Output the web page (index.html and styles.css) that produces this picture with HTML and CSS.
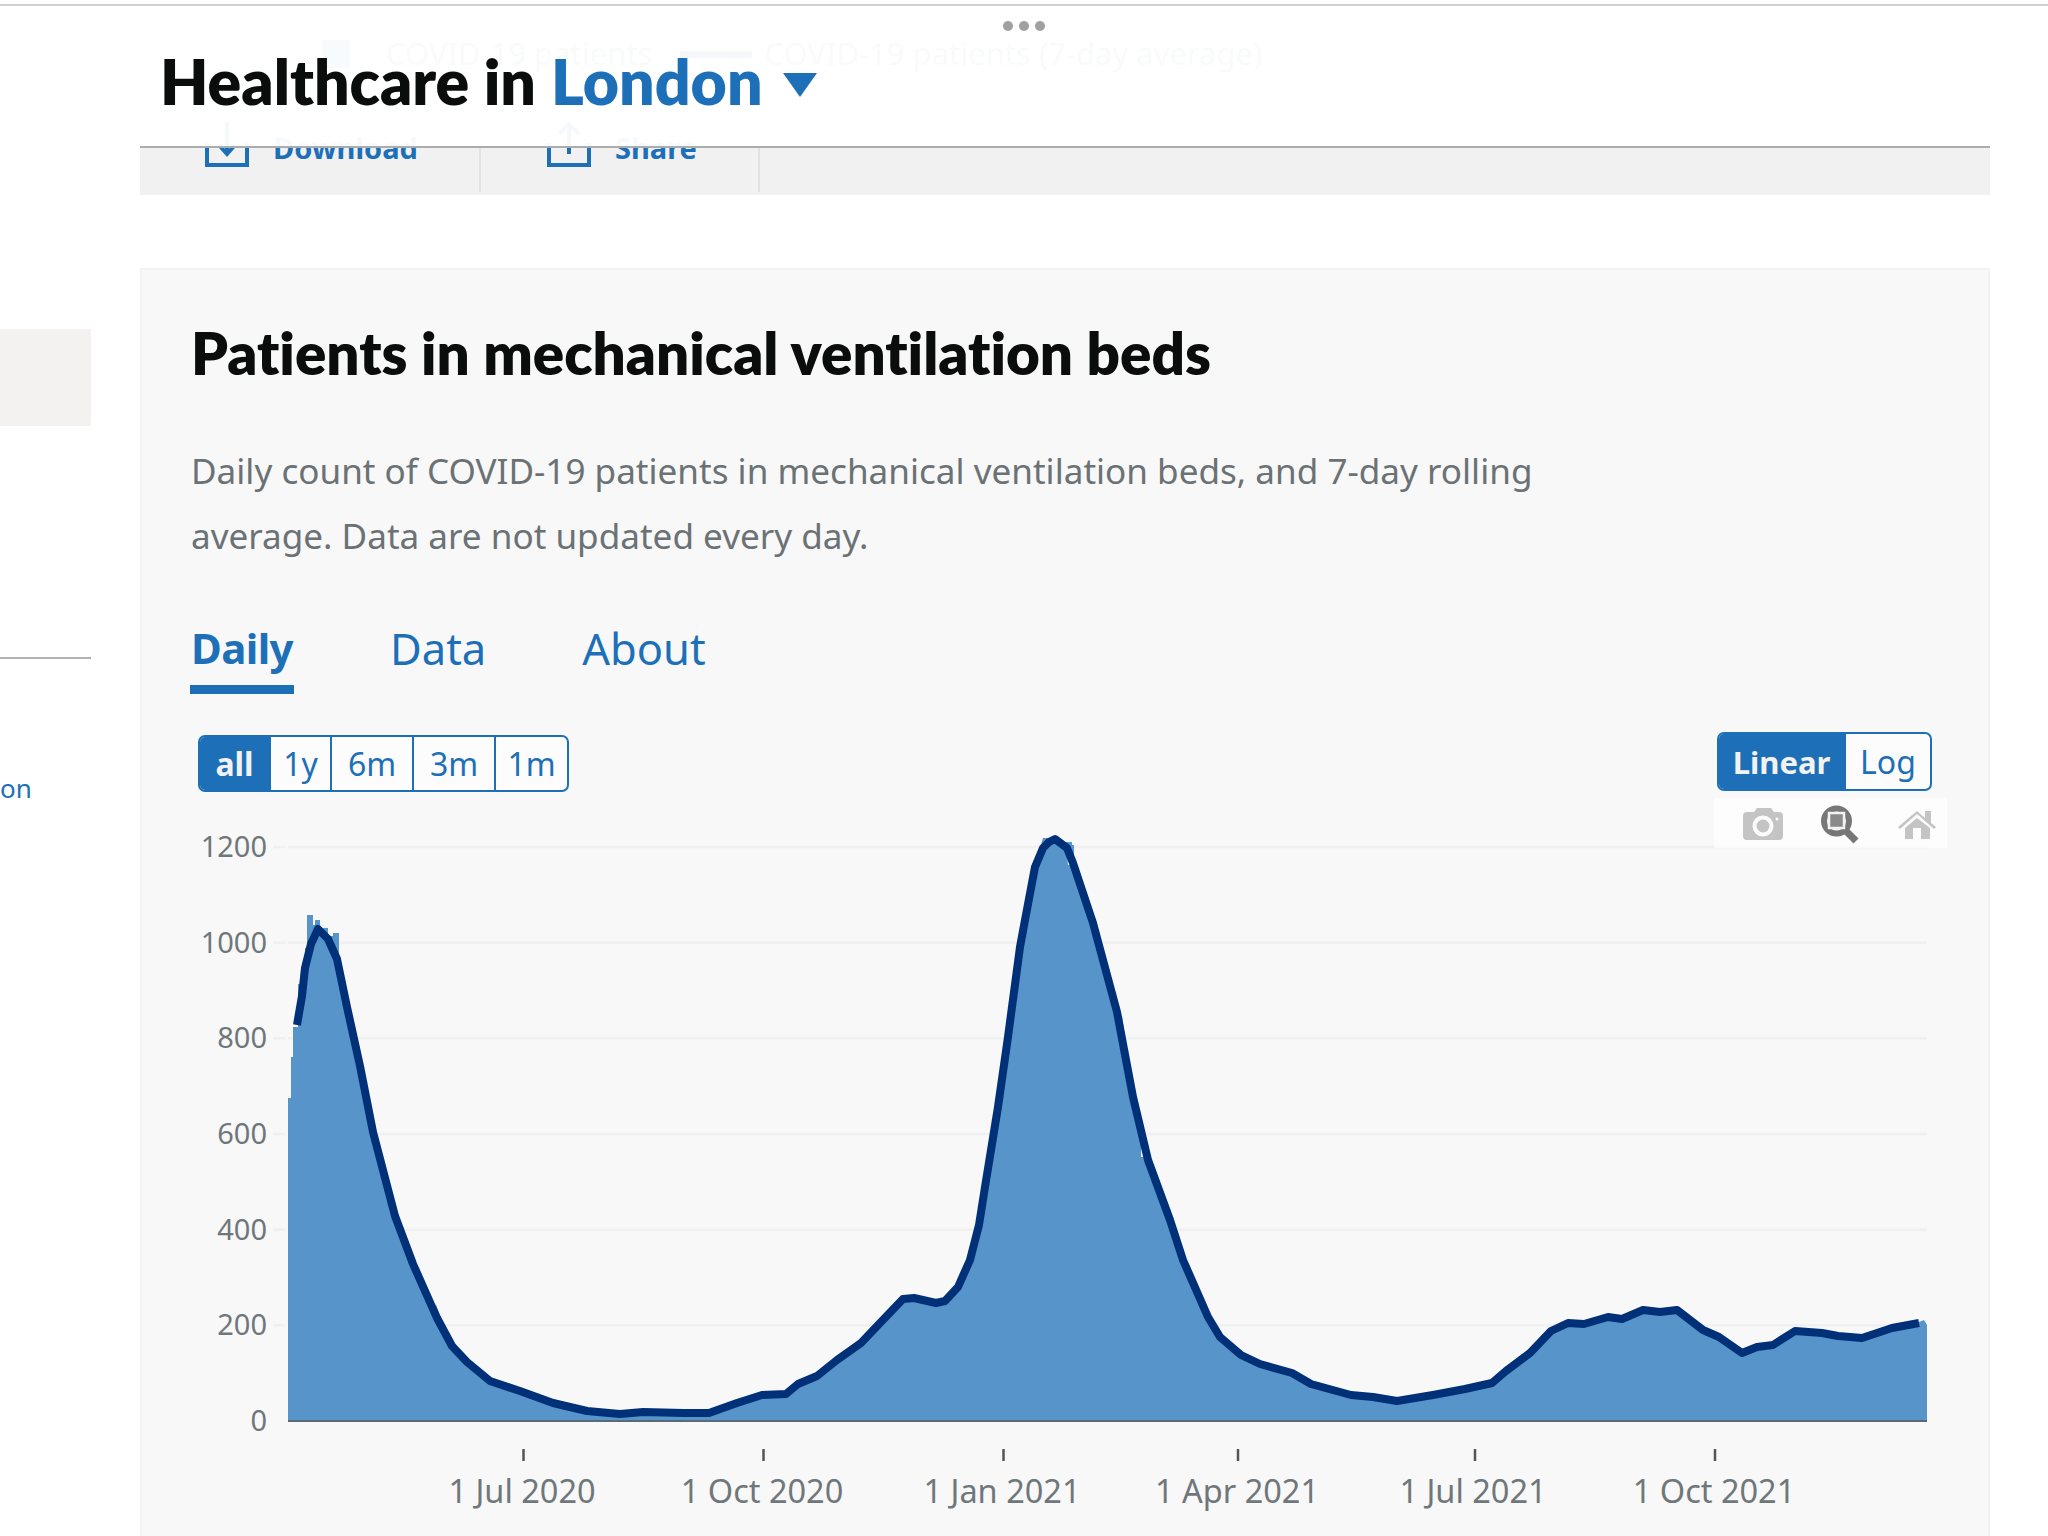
FILE: index.html
```html
<!DOCTYPE html>
<html lang="en">
<head>
<meta charset="utf-8">
<title>Healthcare in London</title>
<link rel="stylesheet" href="styles.css">
</head>
<body>
<div class="page">
  <aside class="side">
    <div class="side-box"></div>
    <div class="side-rule"></div>
    <a class="side-link">on</a>
  </aside>
  <main class="main">
    <div class="legend">
      <span class="swatch-box"></span><span class="legend-text">COVID-19 patients</span>
      <span class="swatch-line"></span><span class="legend-text">COVID-19 patients (7-day average)</span>
    </div>
    <div class="toolbar">
      <a class="tool tool-first">
        <svg class="tool-icon" viewBox="0 0 44 46"><path d="M2 21v22h40V21M22 0v30M14 23l8 9 8-9" fill="none" stroke="#1d70b8" stroke-width="4"/></svg>
        <span>Download</span>
      </a>
      <a class="tool tool-second">
        <svg class="tool-icon" viewBox="0 0 44 46"><path d="M2 21v22h40V21M22 32V3M12 12l10-10 10 10" fill="none" stroke="#1d70b8" stroke-width="4"/></svg>
        <span>Share</span>
      </a>
    </div>
    <section class="card">
      <h2 class="card-title">Patients in mechanical ventilation beds</h2>
      <p class="card-text">Daily count of COVID-19 patients in mechanical ventilation beds, and 7-day rolling average. Data are not updated every day.</p>
      <nav class="tabs">
        <a class="tab tab-active">Daily</a>
        <a class="tab">Data</a>
        <a class="tab">About</a>
      </nav>
      <div class="controls">
        <div class="range">
          <span class="seg seg-all seg-on">all</span>
          <span class="seg seg-1y">1y</span>
          <span class="seg seg-6m">6m</span>
          <span class="seg seg-3m">3m</span>
          <span class="seg seg-1m">1m</span>
        </div>
        <div class="scale">
          <span class="seg seg-linear seg-on">Linear</span>
          <span class="seg seg-log">Log</span>
        </div>
      </div>
      <div class="chart">
        <div class="modebar">
          <svg class="mode-svg" viewBox="1714 798 233 50">
            <path fill="#c4c4c4" d="M1747 812h7l3-4h14l3 4h5a4 4 0 0 1 4 4v20a4 4 0 0 1-4 4h-32a4 4 0 0 1-4-4v-20a4 4 0 0 1 4-4z"/>
            <circle cx="1763" cy="826" r="8.5" fill="none" stroke="#fcfcfc" stroke-width="4"/>
            <circle cx="1777" cy="819" r="1.5" fill="#fcfcfc"/>
            <circle cx="1836.5" cy="821" r="12.5" fill="none" stroke="#777" stroke-width="6"/>
            <rect x="1829" y="813" width="15" height="15" fill="#8a8a8a" stroke="#f2f2f2" stroke-width="2.5"/>
            <path d="M1846 831l10 10" stroke="#777" stroke-width="7" fill="none"/>
            <path fill="#c4c4c4" d="M1917 811l8 7v-7h6v12l5 4-2 2-17-15-17 15-2-2zM1905 828l12-10 13 10v11h-9v-11h-8v11h-8z"/>
          </svg>
        </div>
        <svg class="plot" viewBox="142 798 1846 738">
          <g class="grid">
            <path d="M273 847H285M288 847H1927M273 942.7H285M288 942.7H1927M273 1038.3H285M288 1038.3H1927M273 1134H285M288 1134H1927M273 1229.7H285M288 1229.7H1927M273 1325.3H285M288 1325.3H1927"/>
          </g>
          <path class="area" d="M288 1421V1098H291V1057H293V1027H298V984H302V963H305V948H307V915H313V925H315V920H320V928H328V936H333V933H339V958L346 1005L360 1062L373 1130L395 1214L413 1262L430 1300H432V1305H436L452 1346L467 1362L490 1381L520 1391L553 1402L587 1410L620 1414V1418H622V1414L643 1411L684 1413L709 1413L737 1403L762 1395L786 1393L798 1384L817 1376L837 1360L861 1342L880 1323L903 1299L914 1296L936 1302L945 1301L958 1286L972 1256L977 1238L985 1186L998 1106L1008 1036L1020 946L1025 920L1035 866L1043 838H1060V842H1072V845H1074V865L1093 923L1117 1010H1119V1016H1122L1133 1096L1148 1160L1170 1220L1184 1260L1208 1316L1220 1336L1241 1353L1259 1363L1292 1372L1311 1384L1351 1395L1373 1396L1397 1401L1433 1395L1465 1389L1492 1382L1506 1370L1530 1353L1551 1330L1568 1323L1584 1324L1608 1316L1622 1318L1643 1310L1660 1311L1677 1310L1703 1330L1719 1336L1742 1352L1757 1347L1773 1345L1795 1330L1822 1332L1838 1336L1862 1338L1892 1328L1919 1322L1924 1320L1927 1325V1421Z"/>
          <path class="notch" d="M1067 853h3v12h-2zM1141 1144h2v13h-2z"/>
          <path class="axis" d="M288 1421H1927"/>
          <path class="line" d="M297 1025L302 996L305 968L311 944L318 929L328 939L337 959L347 1007L360 1066L373 1132L395 1216L413 1264L437 1318L452 1346L467 1362L490 1381L520 1391L553 1403L587 1411L620 1414L643 1412L684 1413L709 1413L737 1403L762 1395L786 1394L798 1384L817 1376L837 1360L861 1343L880 1323L903 1299L914 1298L936 1303L945 1301L958 1287L970 1260L979 1225L985 1187L998 1107L1008 1037L1020 947L1025 920L1035 867L1043 848L1049 842L1055 839L1067 848L1073 863L1093 923L1117 1012L1133 1097L1148 1160L1170 1220L1183 1260L1208 1317L1220 1337L1241 1355L1260 1364L1292 1373L1311 1384L1351 1395L1373 1397L1397 1401L1433 1395L1465 1389L1492 1383L1506 1371L1530 1353L1551 1331L1568 1323L1584 1324L1608 1317L1622 1319L1643 1310L1660 1312L1677 1310L1703 1330L1719 1337L1742 1353L1757 1347L1773 1345L1795 1331L1822 1333L1838 1336L1862 1338L1892 1328L1919 1323"/>
          <g class="ylabels">
            <text x="267" y="857">1200</text>
            <text x="267" y="952.7">1000</text>
            <text x="267" y="1048.3">800</text>
            <text x="267" y="1144">600</text>
            <text x="267" y="1239.7">400</text>
            <text x="267" y="1335.3">200</text>
            <text x="267" y="1431">0</text>
          </g>
          <path class="ticks" d="M523.5 1449v12M763.5 1449v12M1003.5 1449v12M1238 1449v12M1475 1449v12M1715 1449v12"/>
          <g class="xlabels">
            <text x="522" y="1503">1 Jul 2020</text>
            <text x="762" y="1503">1 Oct 2020</text>
            <text x="1002" y="1503">1 Jan 2021</text>
            <text x="1237" y="1503">1 Apr 2021</text>
            <text x="1473" y="1503">1 Jul 2021</text>
            <text x="1714" y="1503">1 Oct 2021</text>
          </g>
        </svg>
      </div>
    </section>
  </main>
</div>
<header class="sticky">
  <div class="dots"><i></i><i></i><i></i></div>
  <div class="sticky-inner">
    <h1 class="page-title">Healthcare in <span class="place">London</span><span class="caret"></span></h1>
  </div>
</header>
</body>
</html>
```
FILE: styles.css
```css
* { box-sizing: border-box; }
html, body { margin: 0; padding: 0; background: #fff; }
body {
  width: 2048px;
  height: 1536px;
  overflow: hidden;
  font-family: "Noto Sans", "Open Sans", sans-serif;
  position: relative;
}
.page { display: flex; height: 1536px; overflow: hidden; }

.side { width: 91px; padding-top: 329px; flex: none; }
.side-box { height: 97px; background: #f3f2f1; }
.side-rule { height: 2px; background: #b1b4b6; margin-top: 231px; }
.side-link { display: block; margin-top: 109px; color: #1d70b8; font-size: 26px; line-height: 40px; }

.main { width: 1850px; margin-left: 49px; flex: none; }

.legend { display: flex; align-items: center; height: 106px; padding: 37px 0 35px 182px; color: #6f777b; font-size: 31px; }
.swatch-box { width: 28px; height: 28px; background: #5694ca; margin-right: 36px; flex: none; }
.swatch-line { width: 72px; height: 7px; background: #003078; margin: 0 12px 0 28px; flex: none; }
.legend-text { white-space: nowrap; line-height: 34px; margin-top: -2px; }

.toolbar { display: flex; height: 89px; background: #f1f1f1; }
.tool { display: flex; align-items: flex-start; color: #1d70b8; font-size: 29px; font-weight: 700; height: 86px; border-right: 2px solid #e2e2e2; padding-top: 16px; }
.tool-first { width: 341px; padding-left: 65px; }
.tool-second { width: 279px; padding-left: 66px; }
.tool-icon { width: 44px; height: 46px; flex: none; margin-right: 24px; }
.tool span { line-height: 40px; margin-top: 6px; }

.card { margin-top: 73px; border: 2px solid #f2f2f2; background: #f8f8f8; padding: 0 50px 0 49px; height: 1300px; }
.card-title { margin: 46px 0 0 0; font-family: Lato, "Noto Sans", sans-serif; font-size: 58.3px; line-height: 72px; font-weight: 800; color: #0b0c0c; white-space: nowrap; font-variant-ligatures: none; }
.card-text { margin: 51px 0 0; width: 1400px; font-size: 35.1px; line-height: 65px; color: #6b7276; position: relative; top: -1px; }
.tabs { display: flex; margin-top: 50px; }
.tab { font-size: 43.5px; line-height: 56px; color: #1d70b8; height: 75px; margin-right: 96px; padding-top: 1px; }
.tab-active { font-size: 42px; font-weight: 700; border-bottom: 9px solid #1d70b8; margin-left: -1px; padding: 1px 1px 0; letter-spacing: -0.6px; }

.controls { display: flex; justify-content: space-between; align-items: flex-start; margin-top: 38px; height: 66px; padding: 3px 6px 0 7px; }
.range, .scale { display: flex; height: 57px; border: 2px solid #1d70b8; border-radius: 7px; background: #fcfcfc; overflow: hidden; }
.scale { margin-top: -3px; height: 59px; }
.seg { display: flex; align-items: center; justify-content: center; font-size: 32px; color: #1d70b8; border-right: 2px solid #1d70b8; height: 100%; }
.seg:last-child { border-right: 0; }
.seg-on { background: #1d70b8; color: #f3f2f1; font-weight: 700; }
.seg-all { width: 71px; }
.seg-1y { width: 61px; }
.seg-6m { width: 82px; }
.seg-3m { width: 82px; }
.seg-1m { flex: 1; }
.range { width: 371px; }
.scale { width: 215px; }
.seg-linear { width: 127px; font-size: 31px; }
.seg-log { flex: 1; }

.chart { position: relative; margin: 0 -50px 0 -49px; width: 1846px; height: 738px; }
.plot { display: block; width: 1846px; height: 738px; }
.modebar { position: absolute; left: 1572px; top: 0; width: 233px; height: 50px; background: rgba(255, 255, 255, 0.7); }
.mode-svg { display: block; width: 233px; height: 50px; }
.grid path { fill: none; stroke: #f0f0f0; stroke-width: 2.5; }
.area { fill: #5694ca; }
.notch { fill: #f4f7fa; }
.axis { fill: none; stroke: #5c6a78; stroke-width: 2; }
.line { fill: none; stroke: #003078; stroke-width: 8; stroke-linejoin: round; }
.ticks { fill: none; stroke: #555; stroke-width: 2.5; }
.ylabels text { font-size: 29px; fill: #6f777b; text-anchor: end; }
.xlabels text { font-size: 32.5px; fill: #6f777b; text-anchor: middle; }

.sticky { position: absolute; top: 4px; left: 0; width: 2048px; height: 144px; border-top: 2px solid #d0d0d0; }
.sticky-inner { margin: 0 58px 0 140px; height: 142px; background: rgba(255, 255, 255, 0.96); border-bottom: 2px solid #a9adb0; padding: 35px 0 0 20px; }
.page-title { margin: 0; font-family: Lato, "Noto Sans", sans-serif; font-size: 62.5px; line-height: 80px; font-weight: 800; color: #0b0c0c; white-space: nowrap; display: flex; align-items: center; }
.place { color: #1d70b8; margin-left: 15px; }
.caret { width: 0; height: 0; border-left: 17px solid transparent; border-right: 17px solid transparent; border-top: 24px solid #1d70b8; margin: 7px 0 0 20px; }
.dots { position: absolute; left: 1003px; top: 15px; display: flex; gap: 6px; z-index: 1; }
.dots i { display: block; width: 10px; height: 10px; border-radius: 50%; background: #a0a0a0; }
```
